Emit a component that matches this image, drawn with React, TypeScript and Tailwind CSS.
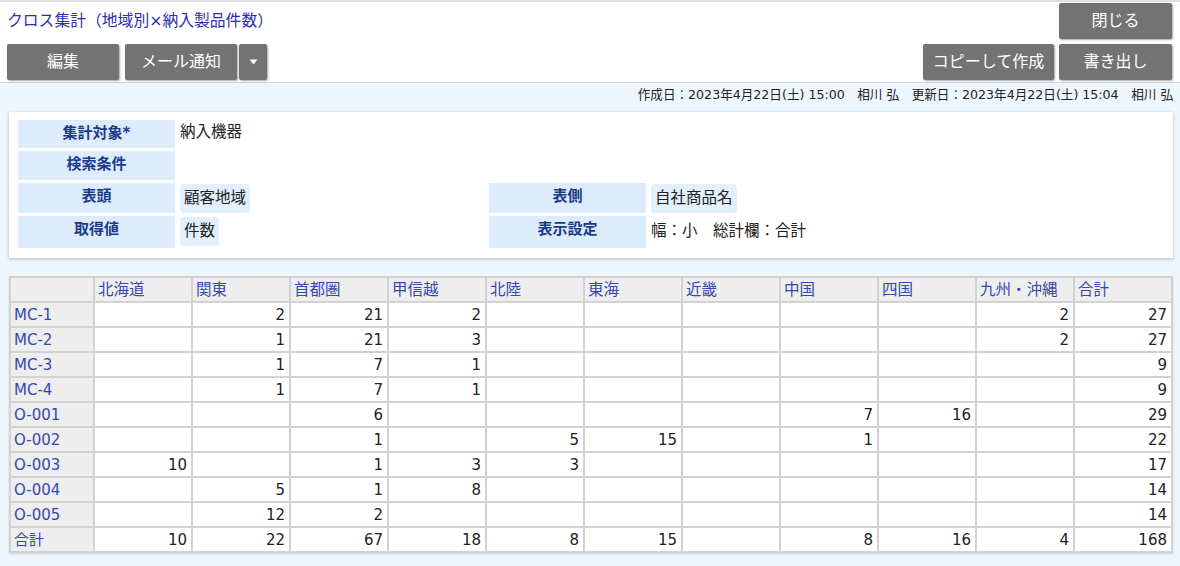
import React from "react";

const font = { fontFamily: '"DejaVu Sans", "Noto Sans CJK JP", sans-serif' };

const cols = ["北海道", "関東", "首都圏", "甲信越", "北陸", "東海", "近畿", "中国", "四国", "九州・沖縄", "合計"];
const rows: [string, (number | null)[]][] = [
  ["MC-1", [null, 2, 21, 2, null, null, null, null, null, 2, 27]],
  ["MC-2", [null, 1, 21, 3, null, null, null, null, null, 2, 27]],
  ["MC-3", [null, 1, 7, 1, null, null, null, null, null, null, 9]],
  ["MC-4", [null, 1, 7, 1, null, null, null, null, null, null, 9]],
  ["O-001", [null, null, 6, null, null, null, null, 7, 16, null, 29]],
  ["O-002", [null, null, 1, null, 5, 15, null, 1, null, null, 22]],
  ["O-003", [10, null, 1, 3, 3, null, null, null, null, null, 17]],
  ["O-004", [null, 5, 1, 8, null, null, null, null, null, null, 14]],
  ["O-005", [null, 12, 2, null, null, null, null, null, null, null, 14]],
  ["合計", [10, 22, 67, 18, 8, 15, null, 8, 16, 4, 168]],
];

function Btn({ children, className = "" }: { children: React.ReactNode; className?: string }) {
  return (
    <div
      className={
        "h-[36px] flex items-center justify-center bg-[#737373] text-white text-[16px] rounded-[2px] shadow-[1px_1px_2px_rgba(0,0,0,0.35)] " +
        className
      }
      style={font}
    >
      {children}
    </div>
  );
}

function Label({ children }: { children: React.ReactNode }) {
  return (
    <div className="w-[157px] shrink-0 bg-[#dcecfc] text-[#1b3a8c] font-bold text-[15px] flex justify-center pt-[2px]">
      {children}
    </div>
  );
}

function Chip({ children }: { children: React.ReactNode }) {
  return (
    <div className="bg-[#e2effc] rounded-[4px] px-[4px] h-[29px] flex items-center text-[15.5px] text-[#222]">
      {children}
    </div>
  );
}

export default function App() {
  return (
    <div className="w-[1180px] h-[566px] bg-[#eef6fd] overflow-hidden" style={font}>
      <div className="bg-white border-t-2 border-[#e0e0e0] border-b border-b-[#cfd6dd] h-[83px] relative">
        <div className="absolute left-[7px] top-[7px] text-[15.8px] text-[#2b2fb0]">クロス集計（地域別×納入製品件数）</div>
        <div className="flex justify-end pr-[8px] pt-[1px]">
          <Btn className="w-[113px]">閉じる</Btn>
        </div>
        <div className="flex items-center px-[7px] mt-[5px]">
          <Btn className="w-[112px]">編集</Btn>
          <Btn className="w-[112px] ml-[6px]">メール通知</Btn>
          <Btn className="w-[28px] ml-[2px]">
            <svg width="9" height="6" viewBox="0 0 9 6">
              <path d="M0.5 0.5 L8.5 0.5 L4.5 5.5 Z" fill="#ffffff" />
            </svg>
          </Btn>
          <div className="flex-1" />
          <Btn className="w-[131px]">コピーして作成</Btn>
          <Btn className="w-[113px] ml-[5px] mr-[1px]">書き出し</Btn>
        </div>
      </div>
      <div className="text-right text-[12.6px] text-[#222] pr-[7px] pt-[3px] h-[26px]">
        作成日：2023年4月22日(土) 15:00　相川 弘　更新日：2023年4月22日(土) 15:04　相川 弘
      </div>
      <div className="mx-[9px] mt-[3px] w-[1164px] h-[146px] bg-white shadow-[0_1px_3px_rgba(0,0,0,0.25)] pl-[9px] pt-[8px]">
        <div className="flex flex-col gap-[3px]">
          <div className="flex h-[28px]">
            <Label>集計対象*</Label>
            <div className="pl-[5px] pt-[1px] text-[15.5px] text-[#222]">納入機器</div>
          </div>
          <div className="flex h-[29px]">
            <Label>検索条件</Label>
          </div>
          <div className="flex h-[30px]">
            <Label>表頭</Label>
            <div className="w-[314px] pl-[5px] pt-[1px]">
              <div className="inline-flex"><Chip>顧客地域</Chip></div>
            </div>
            <Label>表側</Label>
            <div className="pl-[5px] pt-[1px]">
              <div className="inline-flex"><Chip>自社商品名</Chip></div>
            </div>
          </div>
          <div className="flex h-[32px]">
            <Label>取得値</Label>
            <div className="w-[314px] pl-[5px] pt-[1px]">
              <div className="inline-flex"><Chip>件数</Chip></div>
            </div>
            <Label>表示設定</Label>
            <div className="pl-[5px] pt-[4px] text-[15.5px] text-[#222]">幅：小　総計欄：合計</div>
          </div>
        </div>
      </div>
      <div className="mx-[9px] mt-[18px] w-[1164px] shadow-[0_1px_2px_rgba(0,0,0,0.15)]">
        <table className="border-collapse w-full table-fixed text-[15px]">
          <colgroup>
            <col className="w-[84px]" />
            {cols.map((c) => (
              <col key={c} />
            ))}
          </colgroup>
          <thead>
            <tr className="h-[25px]">
              <th className="bg-[#eeeeee] border-2 border-[#d2d2d2]" />
              {cols.map((c) => (
                <th key={c} className="bg-[#eeeeee] border-2 border-[#d2d2d2] text-left font-normal text-[15.5px] text-[#3548b0] px-[3px] leading-[20px]">
                  {c}
                </th>
              ))}
            </tr>
          </thead>
          <tbody>
            {rows.map(([name, vals]) => (
              <tr key={name} className="h-[25px]">
                <td className="bg-[#eeeeee] border-2 border-[#d2d2d2] text-[#3548b0] px-[3px] leading-[20px]">{name}</td>
                {vals.map((v, i) => (
                  <td key={i} className="bg-white border-2 border-[#d2d2d2] text-right text-[#222] px-[4px] leading-[20px]">
                    {v ?? ""}
                  </td>
                ))}
              </tr>
            ))}
          </tbody>
        </table>
      </div>
    </div>
  );
}
